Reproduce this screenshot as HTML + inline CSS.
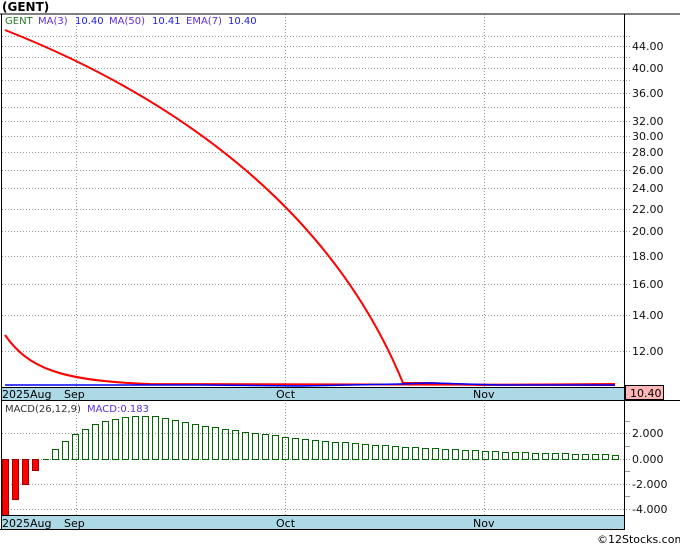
<!DOCTYPE html>
<html><head><meta charset="utf-8"><style>
body{margin:0;background:#fff;width:680px;height:546px;overflow:hidden;font-family:"DejaVu Sans","Liberation Sans",sans-serif}
</style></head><body>
<svg id="s" width="680" height="546" xmlns="http://www.w3.org/2000/svg" font-family="DejaVu Sans, Liberation Sans, sans-serif">
<text x="2" y="11" font-size="12" font-weight="bold" fill="#000">(GENT)</text>
<rect x="0" y="14" width="680" height="516" fill="#fff"/>
<g id="grid" stroke="#999" stroke-width="1" stroke-dasharray="1,2"></g>
<rect x="2" y="387" width="622" height="13" fill="#add8e6"/>
<rect x="2" y="516" width="622" height="13" fill="#add8e6"/>
<g id="bars"></g>
<path fill="none" stroke="#f00" stroke-width="2" d="M5,30 C170,95 330,205 403,383 L430,383 480,385 615,384"/>
<path fill="none" stroke="#f00" stroke-width="2" d="M5,335 C28,368 60,381 150,384 L615,385"/>
<polyline fill="none" stroke="#0000ff" stroke-width="1.5" points="5,385 100,385 200,385 300,386 400,384 430,383 500,385 615,385"/>
<line x1="0" y1="14" x2="680" y2="14" stroke="#000"/>
<line x1="1.5" y1="14" x2="1.5" y2="530" stroke="#000"/>
<line x1="624.5" y1="14" x2="624.5" y2="530" stroke="#000"/>
<line x1="2" y1="387.5" x2="624" y2="387.5" stroke="#000"/>
<line x1="2" y1="400.5" x2="680" y2="400.5" stroke="#000"/>
<line x1="2" y1="515.5" x2="624" y2="515.5" stroke="#000"/>
<line x1="0" y1="529.5" x2="624" y2="529.5" stroke="#000"/>
<g font-size="11" fill="#000">
<text x="2" y="398">2025Aug</text><text x="64" y="398">Sep</text><text x="276" y="398">Oct</text><text x="473" y="398">Nov</text>
<text x="2" y="527">2025Aug</text><text x="64" y="527">Sep</text><text x="276" y="527">Oct</text><text x="473" y="527">Nov</text>
</g>
<g font-size="10">
<text x="5" y="24" fill="#2a7a2a">GENT</text>
<text x="38" y="24" fill="#5a2ee0">MA(3)</text><text x="75" y="24" fill="#2222e0">10.40</text>
<text x="109" y="24" fill="#5a2ee0">MA(50)</text><text x="152" y="24" fill="#2222e0">10.41</text>
<text x="186" y="24" fill="#5a2ee0">EMA(7)</text><text x="228" y="24" fill="#2222e0">10.40</text>
<text x="5" y="412" fill="#333">MACD(26,12,9)</text>
<text x="87" y="412" fill="#5a2ee0">MACD:0.183</text>
</g>
<g id="axis" font-size="11" fill="#111"></g>
<rect x="625.5" y="385.5" width="38" height="14" fill="#ffb6b6" stroke="#000"/>
<text x="630" y="397" font-size="11" fill="#000">10.40</text>
<text x="597" y="543" font-size="11" fill="#000">©12Stocks.com</text>
</svg>
<script>
var NS="http://www.w3.org/2000/svg";
function el(p,n,a,t){var e=document.createElementNS(NS,n);for(var k in a)e.setAttribute(k,a[k]);if(t)e.textContent=t;document.getElementById(p).appendChild(e);}
function py(p){return 46+235*Math.log(44/p);}
var labels=[44,40,36,32,30,28,26,24,22,20,18,16,14,12];
var ticks=[46,42,38,34];
labels.concat(ticks).forEach(function(p){var y=Math.round(py(p))+.5;el("grid","line",{x1:2,y1:y,x2:630,y2:y});});
labels.forEach(function(p){var y=Math.round(py(p));el("axis","text",{x:632,y:y+4},p.toFixed(2));});
[433,459,484,509].forEach(function(y,i){el("grid","line",{x1:2,y1:y+.5,x2:630,y2:y+.5});el("axis","text",{x:632,y:y+4},["2.000","0.000","-2.000","-4.000"][i]);});
[421,446,471,496].forEach(function(y){el("grid","line",{x1:624,y1:y+.5,x2:630,y2:y+.5,"stroke-dasharray":"none"});});
[76.5,285.5,484.5].forEach(function(x){el("grid","line",{x1:x,y1:14,x2:x,y2:387});el("grid","line",{x1:x,y1:400,x2:x,y2:515});});
[[2,56],[12,40],[22,25],[32,11]].forEach(function(b){el("bars","rect",{x:b[0]+.5,y:459.5,width:6,height:b[1],fill:"#f00",stroke:"#900"});});
el("bars","line",{x1:43,y1:459.5,x2:49,y2:459.5,stroke:"#060"});
var hs=[10,18,25,30,35,38,40,42,43,43,43];
for(var i=0;i<57;i++){var x=52+10*i;if(x>612)break;var h=i<hs.length?hs[i]:43*Math.exp(-(i-10)/20);h=Math.max(2,Math.round(h));el("bars","rect",{x:x+.5,y:459.5-h,width:6,height:h,fill:"none",stroke:"#060"});}
</script>
</body></html>
